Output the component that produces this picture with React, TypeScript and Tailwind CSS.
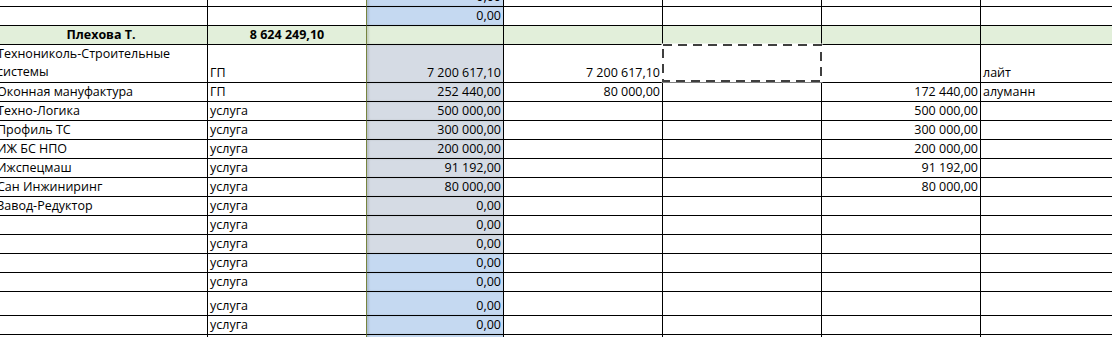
import React from 'react'

type Fill = 'blue' | 'gray' | 'green' | 'none'

interface SheetRow {
  h: string
  cells: string[]
  fill: Fill
  green?: boolean
  wrapA?: string[]
}

const rows: SheetRow[] = [
  { h: 'h-[20px]', cells: ['', '', '0,00', '', '', '', ''], fill: 'blue' },
  { h: 'h-[19px]', cells: ['', '', '0,00', '', '', '', ''], fill: 'blue' },
  { h: 'h-[19px]', cells: ['Плехова Т.', '8 624 249,10', '', '', '', '', ''], fill: 'green', green: true },
  {
    h: 'h-[38px]',
    cells: ['', 'ГП', '7 200 617,10', '7 200 617,10', '', '', 'лайт'],
    fill: 'gray',
    wrapA: ['Технониколь-Строительные', 'системы'],
  },
  { h: 'h-[19px]', cells: ['Оконная мануфактура', 'ГП', '252 440,00', '80 000,00', '', '172 440,00', 'алуманн'], fill: 'gray' },
  { h: 'h-[19px]', cells: ['Техно-Логика', 'услуга', '500 000,00', '', '', '500 000,00', ''], fill: 'gray' },
  { h: 'h-[19px]', cells: ['Профиль ТС', 'услуга', '300 000,00', '', '', '300 000,00', ''], fill: 'gray' },
  { h: 'h-[19px]', cells: ['ИЖ БС НПО', 'услуга', '200 000,00', '', '', '200 000,00', ''], fill: 'gray' },
  { h: 'h-[19px]', cells: ['Ижспецмаш', 'услуга', '91 192,00', '', '', '91 192,00', ''], fill: 'gray' },
  { h: 'h-[19px]', cells: ['Сан Инжиниринг', 'услуга', '80 000,00', '', '', '80 000,00', ''], fill: 'gray' },
  { h: 'h-[19px]', cells: ['Завод-Редуктор', 'услуга', '0,00', '', '', '', ''], fill: 'gray' },
  { h: 'h-[19px]', cells: ['', 'услуга', '0,00', '', '', '', ''], fill: 'gray' },
  { h: 'h-[19px]', cells: ['', 'услуга', '0,00', '', '', '', ''], fill: 'gray' },
  { h: 'h-[19px]', cells: ['', 'услуга', '0,00', '', '', '', ''], fill: 'blue' },
  { h: 'h-[19px]', cells: ['', 'услуга', '0,00', '', '', '', ''], fill: 'blue' },
  { h: 'h-[24px]', cells: ['', 'услуга', '0,00', '', '', '', ''], fill: 'blue' },
  { h: 'h-[19px]', cells: ['', 'услуга', '0,00', '', '', '', ''], fill: 'blue' },
  { h: 'h-[19px]', cells: ['', '', '', '', '', '', ''], fill: 'blue' },
]

const widths = ['w-[213px]', 'w-[159px]', 'w-[137px]', 'w-[159px]', 'w-[159px]', 'w-[159px]', 'flex-1']

const fillClass: Record<Fill, string> = {
  blue: 'bg-[#c5d9f1]',
  gray: 'bg-[#d5dbe4]',
  green: 'bg-[#e2efda]',
  none: 'bg-white',
}

function Cell({ row, i }: { row: SheetRow; i: number }) {
  const text = row.cells[i]
  const base = 'shrink-0 border-b border-black flex items-end pl-[2px] pr-[2px] pb-[1px] overflow-hidden whitespace-nowrap leading-[16px]'
  const border = i === 1 ? 'border-r border-r-[#76843f]' : 'border-r border-black'
  let bg = row.green ? 'bg-[#e2efda]' : 'bg-white'
  let extra = ''
  if (i === 2) {
    bg = fillClass[row.fill]
    extra = 'shadow-[inset_2px_0_2px_rgba(0,0,0,0.12)]'
  }
  const numeric = i === 2 || i === 3 || i === 5
  let align = numeric ? 'justify-end' : 'justify-start'
  if (row.green) align = 'justify-center'

  return (
    <div className={`${widths[i]} ${base} ${border} ${bg} ${extra} ${align} ${row.green ? 'font-bold' : ''}`}>
      {i === 0 && row.wrapA ? (
        <div className="flex flex-col leading-[18px]">
          {row.wrapA.map((l) => (
            <span key={l}>{l}</span>
          ))}
        </div>
      ) : (
        <span>{text}</span>
      )}
    </div>
  )
}

export default function App() {
  return (
    <div
      className="relative w-[1112px] h-[337px] overflow-hidden bg-white text-[12.5px] text-black"
      style={{ fontFamily: '"Open Sans", "Noto Sans", sans-serif' }}
    >
      <div className="flex flex-col -mt-[13px] -ml-[5px] w-[1140px]">
        {rows.map((row, r) => (
          <div key={r} className={`flex ${row.h}`}>
            {row.cells.map((_, i) => (
              <Cell key={i} row={row} i={i} />
            ))}
          </div>
        ))}
      </div>

      {/* copy marquee */}
      <svg className="absolute left-[661px] top-[43px]" width={162} height={40}>
        <rect x={2} y={2} width={158} height={36} fill="none" stroke="#ffffff" strokeWidth={3} />
        <rect x={2} y={2} width={158} height={36} fill="none" stroke="#3f3f3f" strokeWidth={2} strokeDasharray="9 6" />
      </svg>
    </div>
  )
}
